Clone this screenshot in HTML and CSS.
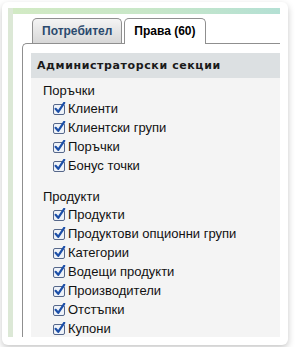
FILE: index.html
```html
<!DOCTYPE html>
<html lang="bg">
<head>
    <meta charset="UTF-8">
    <meta name="viewport" content="width=device-width, initial-scale=1.0">
    <title>Права</title>
    <link rel="stylesheet" href="styles.css">
</head>
<body>
    <div class="card">
        <div class="frame">
            <div class="frame-bar"></div>
            <div class="frame-inner">
                <div class="tabs">
                    <div class="tab">Потребител</div>
                    <div class="tab active">Права (60)</div>
                </div>
                <div class="tab-panel">
                    <div class="section">
                        <div class="section-header">Администраторски секции</div>
                        <div class="section-body">
                            <div class="group">
                                <div class="group-title">Поръчки</div>
                                <div class="perm"><svg class="check" width="13" height="13" viewBox="0 0 13 13"><rect x="0.5" y="2.5" width="11" height="10" rx="1.5" fill="#eef2f8" stroke="#56678a"/><path d="M2.6 6.8 L5.2 9.8 L11.2 0.8" fill="none" stroke="#1c4fa8" stroke-width="2.2" stroke-linecap="round" stroke-linejoin="round"/></svg>Клиенти</div>
                                <div class="perm"><svg class="check" width="13" height="13" viewBox="0 0 13 13"><rect x="0.5" y="2.5" width="11" height="10" rx="1.5" fill="#eef2f8" stroke="#56678a"/><path d="M2.6 6.8 L5.2 9.8 L11.2 0.8" fill="none" stroke="#1c4fa8" stroke-width="2.2" stroke-linecap="round" stroke-linejoin="round"/></svg>Клиентски групи</div>
                                <div class="perm"><svg class="check" width="13" height="13" viewBox="0 0 13 13"><rect x="0.5" y="2.5" width="11" height="10" rx="1.5" fill="#eef2f8" stroke="#56678a"/><path d="M2.6 6.8 L5.2 9.8 L11.2 0.8" fill="none" stroke="#1c4fa8" stroke-width="2.2" stroke-linecap="round" stroke-linejoin="round"/></svg>Поръчки</div>
                                <div class="perm"><svg class="check" width="13" height="13" viewBox="0 0 13 13"><rect x="0.5" y="2.5" width="11" height="10" rx="1.5" fill="#eef2f8" stroke="#56678a"/><path d="M2.6 6.8 L5.2 9.8 L11.2 0.8" fill="none" stroke="#1c4fa8" stroke-width="2.2" stroke-linecap="round" stroke-linejoin="round"/></svg>Бонус точки</div>
                            </div>
                            <div class="group">
                                <div class="group-title">Продукти</div>
                                <div class="perm"><svg class="check" width="13" height="13" viewBox="0 0 13 13"><rect x="0.5" y="2.5" width="11" height="10" rx="1.5" fill="#eef2f8" stroke="#56678a"/><path d="M2.6 6.8 L5.2 9.8 L11.2 0.8" fill="none" stroke="#1c4fa8" stroke-width="2.2" stroke-linecap="round" stroke-linejoin="round"/></svg>Продукти</div>
                                <div class="perm"><svg class="check" width="13" height="13" viewBox="0 0 13 13"><rect x="0.5" y="2.5" width="11" height="10" rx="1.5" fill="#eef2f8" stroke="#56678a"/><path d="M2.6 6.8 L5.2 9.8 L11.2 0.8" fill="none" stroke="#1c4fa8" stroke-width="2.2" stroke-linecap="round" stroke-linejoin="round"/></svg>Продуктови опционни групи</div>
                                <div class="perm"><svg class="check" width="13" height="13" viewBox="0 0 13 13"><rect x="0.5" y="2.5" width="11" height="10" rx="1.5" fill="#eef2f8" stroke="#56678a"/><path d="M2.6 6.8 L5.2 9.8 L11.2 0.8" fill="none" stroke="#1c4fa8" stroke-width="2.2" stroke-linecap="round" stroke-linejoin="round"/></svg>Категории</div>
                                <div class="perm"><svg class="check" width="13" height="13" viewBox="0 0 13 13"><rect x="0.5" y="2.5" width="11" height="10" rx="1.5" fill="#eef2f8" stroke="#56678a"/><path d="M2.6 6.8 L5.2 9.8 L11.2 0.8" fill="none" stroke="#1c4fa8" stroke-width="2.2" stroke-linecap="round" stroke-linejoin="round"/></svg>Водещи продукти</div>
                                <div class="perm"><svg class="check" width="13" height="13" viewBox="0 0 13 13"><rect x="0.5" y="2.5" width="11" height="10" rx="1.5" fill="#eef2f8" stroke="#56678a"/><path d="M2.6 6.8 L5.2 9.8 L11.2 0.8" fill="none" stroke="#1c4fa8" stroke-width="2.2" stroke-linecap="round" stroke-linejoin="round"/></svg>Производители</div>
                                <div class="perm"><svg class="check" width="13" height="13" viewBox="0 0 13 13"><rect x="0.5" y="2.5" width="11" height="10" rx="1.5" fill="#eef2f8" stroke="#56678a"/><path d="M2.6 6.8 L5.2 9.8 L11.2 0.8" fill="none" stroke="#1c4fa8" stroke-width="2.2" stroke-linecap="round" stroke-linejoin="round"/></svg>Отстъпки</div>
                                <div class="perm"><svg class="check" width="13" height="13" viewBox="0 0 13 13"><rect x="0.5" y="2.5" width="11" height="10" rx="1.5" fill="#eef2f8" stroke="#56678a"/><path d="M2.6 6.8 L5.2 9.8 L11.2 0.8" fill="none" stroke="#1c4fa8" stroke-width="2.2" stroke-linecap="round" stroke-linejoin="round"/></svg>Купони</div>
                            </div>
                        </div>
                    </div>
                </div>
            </div>
        </div>
    </div>
</body>
</html>
```

FILE: styles.css
```css
* {
    margin: 0;
    padding: 0;
    box-sizing: border-box;
}

body {
    background: white;
    font-family: "Liberation Sans", Arial, sans-serif;
    font-size: 13px;
    color: #111;
}

.card {
    margin: 2px;
    width: 286px;
    height: 343px;
    padding: 6px 8px 8px 6px;
    background: white;
    border-radius: 6px;
    box-shadow: 0 3px 7px rgba(0, 0, 0, 0.22);
}

.frame {
    height: 329px;
    overflow: hidden;
    display: flex;
    flex-direction: column;
    border-left: 5px solid #dce8d6;
}

.frame-bar {
    height: 6px;
    flex-shrink: 0;
    background: linear-gradient(90deg, #d2eac4 0%, #c8e7c8 50%, #b4e0d4 100%);
}

.frame-inner {
    flex: 1;
    background: white;
    padding-top: 4px;
}

.tabs {
    display: flex;
    gap: 2px;
    padding-left: 19px;
    height: 25px;
}

.tab {
    height: 25px;
    padding: 0 9px;
    line-height: 24px;
    border: 1px solid #8f8f8f;
    border-bottom: none;
    border-radius: 5px 5px 0 0;
    background: linear-gradient(#f4f4f4, #d7d7d7);
    font-weight: bold;
    font-size: 12px;
    color: #2b4a6e;
}

.tab.active {
    position: relative;
    height: 26px;
    margin-bottom: -1px;
    background: white;
    color: #000;
}

.tab-panel {
    margin-left: 9px;
    border-left: 1px solid #8f8f8f;
    border-top: 1px solid #8f8f8f;
    border-top-left-radius: 5px;
    padding: 9px 0 0 8px;
    height: 400px;
}

.section-header {
    height: 25px;
    line-height: 25px;
    padding-left: 6px;
    background: #dce0e2;
    font-family: "DejaVu Sans", sans-serif;
    font-weight: bold;
    font-size: 11px;
    letter-spacing: 0.6px;
    color: #1a1a1a;
}

.section-body {
    background: #f4f4f4;
    padding: 4px 0 20px 12px;
    height: 400px;
}

.group + .group {
    margin-top: 13px;
}

.group-title {
    line-height: 17px;
}

.perm {
    display: flex;
    align-items: center;
    height: 19px;
    padding-left: 10px;
}

.check {
    flex-shrink: 0;
    margin-right: 2px;
}
```
